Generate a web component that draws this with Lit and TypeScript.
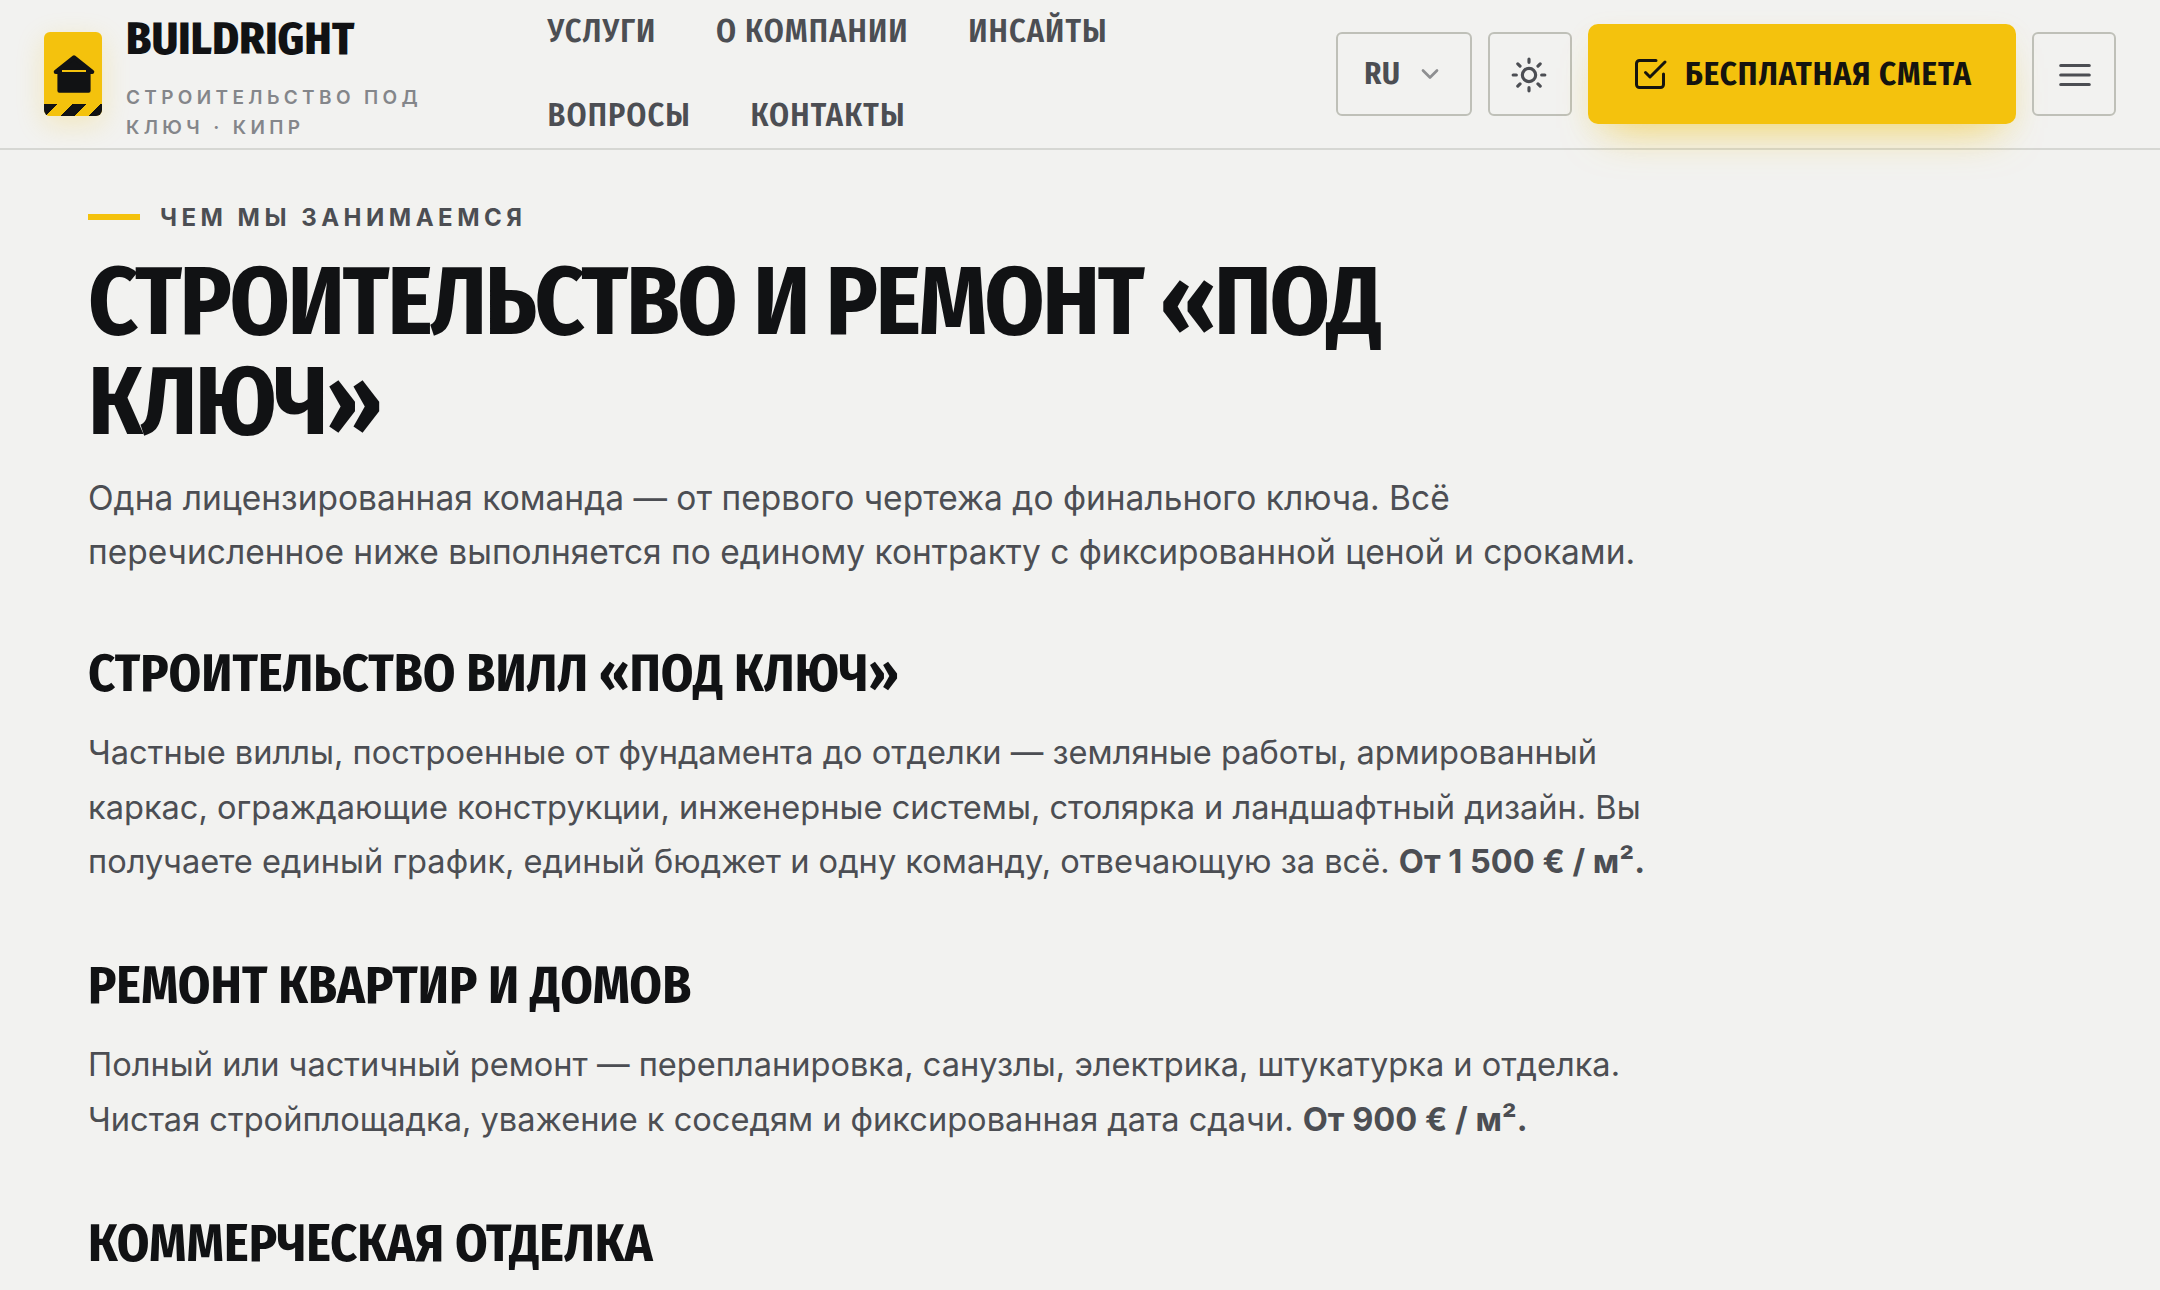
import { LitElement, html, css } from "lit";
import { customElement } from "lit/decorators.js";

interface Service {
  title: string;
  text: string;
  price: string;
}

const NAV = ["Услуги", "О компании", "Инсайты", "Вопросы", "Контакты"];

const SERVICES: Service[] = [
  {
    title: "Строительство вилл «под ключ»",
    text: "Частные виллы, построенные от фундамента до отделки — земляные работы, армированный каркас, ограждающие конструкции, инженерные системы, столярка и ландшафтный дизайн. Вы получаете единый график, единый бюджет и одну команду, отвечающую за всё.",
    price: "От 1\u00a0500 € / м².",
  },
  {
    title: "Ремонт квартир и домов",
    text: "Полный или частичный ремонт — перепланировка, санузлы, электрика, штукатурка и отделка. Чистая стройплощадка, уважение к соседям и фиксированная дата сдачи.",
    price: "От 900 € / м².",
  },
  { title: "Коммерческая отделка", text: "", price: "" },
];

@customElement("site-header")
export class SiteHeader extends LitElement {
  static styles = css`
    :host {
      display: block;
      position: relative;
      z-index: 1;
      font-family: "Fira Sans Condensed", "Open Sans", sans-serif;
      color: #4c4e53;
    }
    .bar {
      box-sizing: border-box;
      height: 150px;
      padding: 0 44px;
      display: flex;
      align-items: center;
      border-bottom: 2px solid #d6d7d3;
    }
    .brand {
      display: flex;
      align-items: center;
      gap: 24px;
      flex: none;
    }
    .logo {
      width: 58px;
      height: 84px;
      border-radius: 6px;
      background: #f4c20d;
      box-shadow: 0 8px 28px rgba(244, 194, 13, 0.22);
    }
    .logo-face {
      display: flex;
      flex-direction: column;
      justify-content: flex-end;
      height: 100%;
      border-radius: 6px;
      overflow: hidden;
    }
    .house {
      flex: 1;
      display: block;
    }
    .hazard {
      height: 12px;
      background: repeating-linear-gradient(135deg, #111214 0 9.8px, #f4c20d 9.8px 20px);
    }
    .names {
      display: flex;
      flex-direction: column;
      gap: 11px;
      width: 300px;
    }
    .name {
      font-size: 45px;
      line-height: 66px;
      font-weight: 800;
      letter-spacing: 0.3px;
      color: #111214;
      text-transform: uppercase;
    }
    .tagline {
      font: 600 19px/30px Inter, sans-serif;
      letter-spacing: 4.35px;
      color: #84868a;
      text-transform: uppercase;
    }
    .nav {
      width: 690px;
      margin-left: 121.5px;
      display: flex;
      flex-wrap: wrap;
      column-gap: 59.5px;
      flex: none;
      padding-bottom: 3px;
    }
    .link {
      font-size: 32px;
      line-height: 84px;
      font-weight: 600;
      letter-spacing: 1.1px;
      text-transform: uppercase;
      white-space: nowrap;
    }
    .actions {
      margin-left: auto;
      display: flex;
      align-items: center;
      gap: 16px;
      flex: none;
    }
    .tool {
      box-sizing: border-box;
      width: 84px;
      height: 84px;
      border: 2px solid #bfc0b8;
      border-radius: 6px;
      display: flex;
      align-items: center;
      justify-content: center;
      padding-top: 1px;
    }
    .theme {
      padding-right: 2px;
    }
    .menu {
      padding-left: 1px;
    }
    .lang {
      width: 136px;
      gap: 15px;
      padding-top: 0;
      font-size: 30.4px;
      font-weight: 700;
      letter-spacing: 1px;
    }
    .cta {
      box-sizing: border-box;
      width: 428px;
      height: 100px;
      border-radius: 10px;
      background: #f4c20d;
      color: #15140f;
      box-shadow: 0 24px 44px -20px rgba(244, 194, 13, 0.6), 0 8px 28px rgba(244, 194, 13, 0.07);
      display: flex;
      align-items: center;
      padding-left: 44px;
      gap: 17px;
      font-size: 32.64px;
      font-weight: 700;
      letter-spacing: 1px;
      text-transform: uppercase;
      white-space: nowrap;
    }
    .icon {
      fill: none;
      stroke: currentColor;
      stroke-width: 2;
      stroke-linecap: round;
      stroke-linejoin: round;
      flex: none;
    }
    .chevron {
      opacity: 0.6;
      stroke-width: 2.3;
    }
  `;

  render() {
    return html`
      <header class="bar">
        <div class="brand">
          <div class="logo">
            <div class="logo-face">
              <svg class="house" viewBox="44 32 58 72">
                <path d="M55.8 72 74 57.3 92.2 72Z" fill="#111214" stroke="#111214" stroke-width="4.2" stroke-linejoin="round" />
                <rect x="57.4" y="70" width="33.2" height="22.7" rx="2" fill="#111214" />
                <rect x="62" y="70" width="24" height="2" fill="#f4c20d" />
              </svg>
              <div class="hazard"></div>
            </div>
          </div>
          <div class="names">
            <div class="name">BuildRight</div>
            <div class="tagline">Строительство под ключ · Кипр</div>
          </div>
        </div>
        <nav class="nav">${NAV.map((item) => html`<a class="link">${item}</a>`)}</nav>
        <div class="actions">
          <div class="tool lang">
            <span>RU</span>
            <svg class="icon chevron" width="28" height="28" viewBox="0 0 24 24"><path d="m6 9 6 6 6-6" /></svg>
          </div>
          <div class="tool theme">
            <svg class="icon" width="38" height="38" viewBox="0 0 24 24">
              <circle cx="12" cy="12" r="4.2" />
              <path d="M12 2v2M12 20v2M4.93 4.93l1.41 1.41M17.66 17.66l1.41 1.41M2 12h2M20 12h2M6.34 17.66l-1.41 1.41M19.07 4.93l-1.41 1.41" />
            </svg>
          </div>
          <div class="cta">
            <svg class="icon" width="36" height="36" viewBox="0 0 24 24">
              <path d="m9 11 3 3L22 4" />
              <path d="M21 12v7a2 2 0 0 1-2 2H5a2 2 0 0 1-2-2V5a2 2 0 0 1 2-2h11" />
            </svg>
            <span>Бесплатная смета</span>
          </div>
          <div class="tool menu">
            <svg class="icon" width="38" height="38" viewBox="0 0 24 24"><path d="M3 6h18M3 12h18M3 18h18" /></svg>
          </div>
        </div>
      </header>
    `;
  }
}

@customElement("app-root")
export class AppRoot extends LitElement {
  static styles = css`
    :host {
      display: block;
      height: 1290px;
      overflow: hidden;
      background: #f2f2f0;
      color: #4c4e53;
      font-family: Inter, sans-serif;
    }
    .content {
      padding: 52px 88px 0;
      width: 1564px;
    }
    .eyebrow {
      display: flex;
      align-items: center;
      gap: 20px;
      font-size: 24px;
      line-height: 30px;
      font-weight: 700;
      letter-spacing: 4.5px;
      text-transform: uppercase;
    }
    .label {
      padding-top: 1px;
      margin-bottom: -1px;
    }
    .rule {
      width: 52px;
      height: 6px;
      background: #f4c20d;
    }
    .title,
    .heading {
      font-family: "Fira Sans Condensed", "Open Sans", sans-serif;
      font-weight: 700;
      color: #111214;
      text-transform: uppercase;
      margin: 0;
    }
    .title {
      width: 1400px;
      margin-top: 20px;
      font-size: 96px;
      line-height: 100px;
      letter-spacing: -0.025em;
    }
    .lead {
      margin: 19px 0 -2.2px;
      font-size: 33.5px;
      line-height: 54px;
    }
    .heading {
      padding-top: 67.2px;
      font-size: 52px;
      line-height: 60px;
    }
    .text {
      margin: 21px 0 0;
      font-size: 32.6px;
      line-height: 54.7px;
    }
    .price {
      font-weight: 700;
    }
  `;

  render() {
    return html`
      <site-header></site-header>
      <main class="content">
        <div class="eyebrow"><span class="rule"></span><span class="label">Чем мы занимаемся</span></div>
        <h1 class="title">Строительство и ремонт «под ключ»</h1>
        <p class="lead">Одна лицензированная команда — от первого чертежа до финального ключа. Всё перечисленное ниже выполняется по единому контракту с фиксированной ценой и сроками.</p>
        ${SERVICES.map(
          (s) => html`
            <section>
              <h2 class="heading">${s.title}</h2>
              ${s.text ? html`<p class="text">${s.text} <strong class="price">${s.price}</strong></p>` : null}
            </section>
          `,
        )}
      </main>
    `;
  }
}
